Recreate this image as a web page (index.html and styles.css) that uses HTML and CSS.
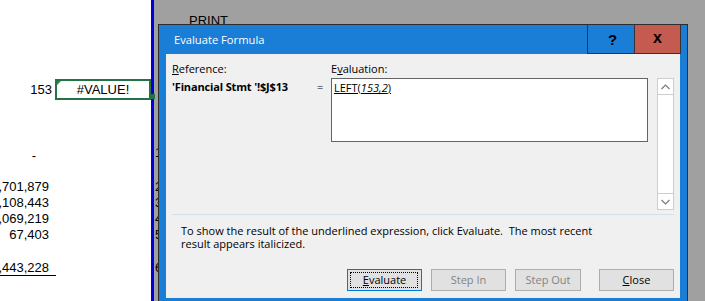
FILE: index.html
```html
<!DOCTYPE html>
<html>
<head>
<meta charset="utf-8">
<link rel="stylesheet" href="styles.css">
</head>
<body>
<div class="screen">
  <div class="sheet">
    <div class="sel-row">
      <div class="c-a">153</div>
      <div class="sel"><span class="err"></span>#VALUE!<span class="handle"></span></div>
    </div>
    <div class="num r-dash">-</div>
    <div class="num r-first">,701,879</div>
    <div class="num">,108,443</div>
    <div class="num">,069,219</div>
    <div class="num">67,403</div>
    <div class="num r-total">,443,228</div>
  </div>
  <div class="divider"></div>
  <div class="back">
    <div class="print">PRINT</div>
    <div class="peek">
      <div class="pk pk-1">1</div>
      <div class="pk pk-2">2</div>
      <div class="pk">3</div>
      <div class="pk">4</div>
      <div class="pk">5</div>
      <div class="pk pk-6">6</div>
    </div>
  </div>

  <div class="dialog">
    <div class="titlebar">
      <div class="title">Evaluate Formula</div>
      <div class="tb-btns">
        <div class="tb-btn help">?</div>
        <div class="tb-btn close">x</div>
      </div>
    </div>
    <div class="content">
      <div class="top">
        <div class="lbl lbl-ref"><u>R</u>eference:</div>
        <div class="lbl lbl-eval">E<u>v</u>aluation:</div>
        <div class="ref">'Financial Stmt '!$J$13</div>
        <div class="eq">=</div>
        <div class="evalbox"><span class="expr">LEFT(<i>153,2</i>)</span></div>
        <div class="scroll">
          <div class="sb-btn sb-up">
            <svg width="9" height="6" viewBox="0 0 9 6"><path d="M0.5 5 L4.5 1 L8.5 5" fill="none" stroke="#7a7a7a" stroke-width="1.2"/></svg>
          </div>
          <div class="sb-track"></div>
          <div class="sb-btn sb-down">
            <svg width="9" height="6" viewBox="0 0 9 6"><path d="M0.5 1 L4.5 5 L8.5 1" fill="none" stroke="#7a7a7a" stroke-width="1.2"/></svg>
          </div>
        </div>
      </div>
      <div class="sep"></div>
      <div class="info">
        <div class="info-line">To show the result of the underlined expression, click Evaluate.&nbsp; The most recent</div>
        <div class="info-line">result appears italicized.</div>
      </div>
      <div class="buttons">
        <div class="btn primary"><u>E</u>valuate</div>
        <div class="btn disabled b-stepin">Step In</div>
        <div class="btn disabled b-stepout">Step Out</div>
        <div class="btn b-close"><u>C</u>lose</div>
      </div>
    </div>
  </div>
</div>
</body>
</html>
```

FILE: styles.css
```css
* { box-sizing: border-box; margin: 0; padding: 0; }
html, body { width: 705px; height: 301px; overflow: hidden; }
body { background: #a0a0a0; font-family: "Liberation Sans", Arial, sans-serif; }

.screen { position: relative; display: flex; width: 705px; height: 301px; }

/* spreadsheet */
.sheet { width: 151px; flex: none; background: #fff; display: flex; flex-direction: column; font-size: 13px; color: #000; }
.sel-row { display: flex; margin-top: 79px; height: 21px; }
.c-a { width: 55px; text-align: right; padding-right: 3px; line-height: 21px; }
.sel { position: relative; z-index: 2; width: 96px; border: 2px solid #217346; text-align: center; line-height: 17px; }
.err { position: absolute; left: 0; top: 0; width: 0; height: 0; border-top: 4px solid #1e8c3c; border-right: 4px solid transparent; }
.handle { position: absolute; right: -6px; bottom: -1px; width: 5px; height: 5px; background: #217346; }
.num { width: 56px; height: 16px; line-height: 16px; display: flex; justify-content: flex-end; padding-right: 7px; white-space: nowrap; overflow: hidden; }
.r-dash { margin-top: 48px; padding-right: 20px; }
.r-first { margin-top: 15px; }
.r-total { margin-top: 17px; height: 16px; line-height: 15px; border-bottom: 1px solid #000; }

.divider { width: 3px; flex: none; background: #0000dc; }

/* background window */
.back { flex: 1; background: #a0a0a0; font-size: 13px; color: #000; }
.print { margin: 13px 0 0 35px; line-height: 16px; }
.peek { margin-left: 1px; }
.pk { line-height: 16px; height: 16px; }
.pk-1 { margin-top: 116px; }
.pk-2 { margin-top: 18px; }
.pk-6 { margin-top: 17px; }

/* dialog */
.dialog { position: absolute; left: 158px; top: 24px; width: 530px; height: 290px; border: 1px solid #2e2e2e; background: #1a7dd6; display: flex; flex-direction: column; font-family: "Open Sans", "Noto Sans", sans-serif; font-size: 11px; color: #000; }
.titlebar { display: flex; height: 29px; flex: none; }
.title { flex: 1; padding-left: 15px; line-height: 30px; color: #fff; font-size: 11.2px; }
.tb-btns { display: flex; margin-right: 6px; }
.tb-btn { width: 47px; height: 29px; border-left: 1px solid #333; border-bottom: 1px solid #333; display: flex; align-items: center; justify-content: center; font-family: "Liberation Sans", Arial, sans-serif; font-weight: bold; color: #000; }
.help { font-size: 15px; padding-left: 3px; }
.close { background: #c45a50; border-right: 1px solid #333; font-size: 16px; padding-bottom: 3px; }

.content { height: 244px; flex: none; margin: 0 7px; background: #f0f0f0; padding: 7px 6px 0 6px; }
.top { display: grid; grid-template-columns: 145px 14px 317px 9px 17px; grid-template-rows: 15px 132px; row-gap: 2px; }
.lbl { line-height: 15px; }
.lbl-ref { grid-column: 1; grid-row: 1; }
.lbl-eval { grid-column: 3; grid-row: 1; }
.ref { grid-column: 1; grid-row: 2; font-weight: bold; line-height: 15px; padding-top: 1px; letter-spacing: -0.15px; }
.eq { grid-column: 2; grid-row: 2; line-height: 15px; padding-top: 1px; }
.evalbox { grid-column: 3; grid-row: 2; align-self: start; height: 64px; background: #fff; border: 1px solid #646464; padding: 1px 2px; line-height: 15px; }
.expr { text-decoration: underline; }
.scroll { grid-column: 5; grid-row: 2; align-self: start; height: 132px; border: 1px solid #cdcdcd; background: #fff; display: flex; flex-direction: column; }
.sb-btn { height: 16px; flex: none; display: flex; align-items: center; justify-content: center; }
.sb-up { border-bottom: 1px solid #cdcdcd; }
.sb-down { border-top: 1px solid #cdcdcd; }
.sb-track { flex: 1; }

.sep { margin-top: 4px; height: 1px; background: #d7e0e6; }
.info { margin-top: 9px; padding-left: 9px; white-space: nowrap; }
.info-line { height: 13px; line-height: 13px; }

.buttons { display: flex; justify-content: flex-end; margin-top: 19px; }
.btn { position: relative; height: 22px; width: 75px; background: #e1e1e1; border: 1px solid #adadad; text-align: center; line-height: 20px; }
.primary { border-color: #0078d7; }
.primary::after { content: ""; position: absolute; left: 2px; right: 3px; top: 2px; bottom: 2px; border: 1px dotted #000; }
.disabled { color: #838383; }
.b-stepin { margin-left: 9px; }
.b-stepout { margin-left: 9px; width: 66px; }
.b-close { margin-left: 18px; }
```
